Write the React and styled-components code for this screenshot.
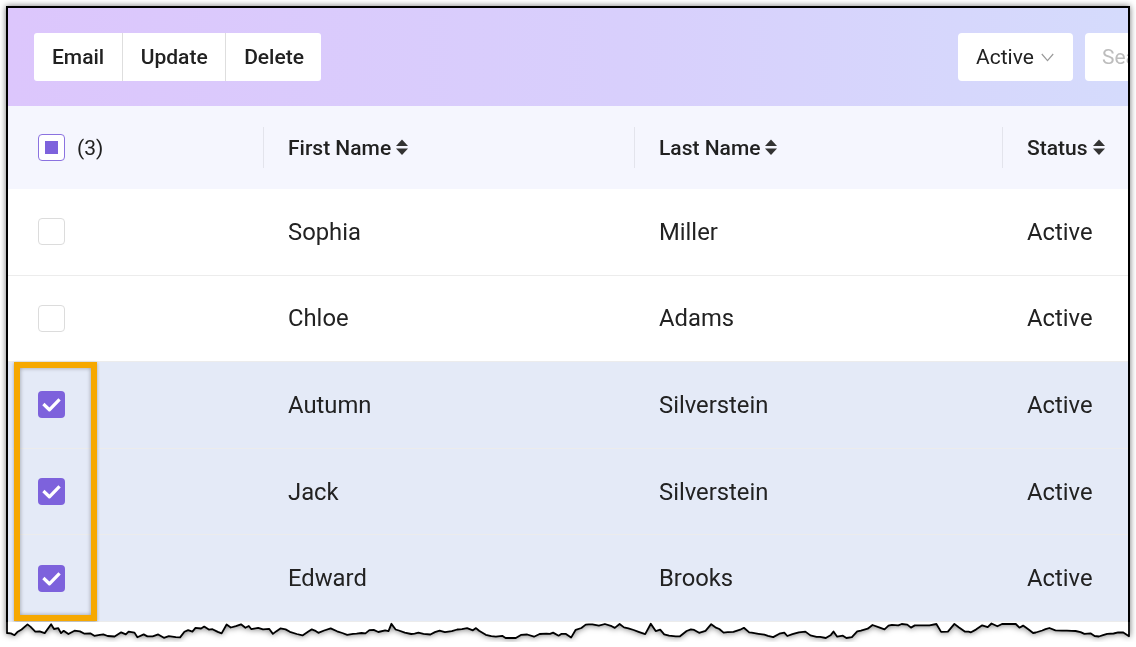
import React, { useMemo } from 'react';
import styled, { createGlobalStyle } from 'styled-components';

const Global = createGlobalStyle`
  html, body { margin: 0; padding: 0; background: #fff; overflow: hidden; }
  body { font-family: Roboto, "Liberation Sans", sans-serif; color: #212121; }
  * { box-sizing: border-box; }
`;

const Frame = styled.div`
  width: 1124px;
  margin: 6px 0 0 6px;
  filter: drop-shadow(0 0 3px rgba(0, 0, 0, 0.55));
`;

const Screen = styled.div`
  border: 2px solid #000;
  border-bottom: none;
  background: #fff;
  overflow: hidden;
`;

const Toolbar = styled.div`
  height: 98px;
  display: flex;
  justify-content: space-between;
  align-items: flex-start;
  padding: 25px 26px 0 26px;
  background: linear-gradient(90deg, #dcc6fc 0%, #d8cffc 55%, #d5dbfc 100%);
  overflow: hidden;
`;

const ButtonGroup = styled.div`
  display: flex;
  height: 48px;
  background: #fff;
  border-radius: 3px;
`;

const ActionButton = styled.button`
  height: 48px;
  padding: 0 17.5px 0 18px;
  border: none;
  border-left: ${(p) => (p.$first ? 'none' : '1px solid #dedede')};
  background: transparent;
  font-family: Roboto, "Liberation Sans", sans-serif;
  font-size: 21px;
  font-weight: 500;
  color: #212121;
`;

const RightGroup = styled.div`
  display: flex;
  gap: 12px;
  margin-right: -200px;
`;

const Dropdown = styled.div`
  width: 115px;
  height: 48px;
  background: #fff;
  border-radius: 4px;
  display: flex;
  align-items: center;
  gap: 7px;
  padding-left: 18px;
  font-size: 21px;
  color: #212121;
`;

const Search = styled.input`
  width: 217px;
  height: 48px;
  background: #fff;
  border: none;
  border-radius: 4px;
  padding: 0 0 0 17px;
  font-family: Roboto, "Liberation Sans", sans-serif;
  font-size: 21px;
  outline: none;
  &::placeholder { color: #bdbdbd; }
`;

const Table = styled.div`
  position: relative;
`;

const cols = '255px 371px 368px 1fr';

const HeaderRow = styled.div`
  display: grid;
  grid-template-columns: ${cols};
  align-items: center;
  height: 83px;
  background: #f5f6fe;
`;

const HeaderCell = styled.div`
  display: flex;
  align-items: center;
  height: 41px;
  gap: ${(p) => (p.$select ? '12px' : '5px')};
  padding-left: ${(p) => (p.$select ? '30px' : '24px')};
  border-left: ${(p) => (p.$select ? 'none' : '1px solid #e3e4ec')};
  font-size: 21px;
  font-weight: ${(p) => (p.$select ? 400 : 500)};
  color: #212121;
`;

const Row = styled.div`
  display: grid;
  grid-template-columns: ${cols};
  align-items: center;
  height: 86.6px;
  border-bottom: 1px solid #ececec;
  background: ${(p) => (p.$selected ? '#e4eaf7' : '#fff')};
`;

const Cell = styled.div`
  display: flex;
  align-items: center;
  padding-left: ${(p) => (p.$select ? '30px' : '25px')};
  font-size: 23.8px;
  color: #222;
`;

const Box = styled.span`
  width: 27px;
  height: 27px;
  border-radius: 4px;
  display: flex;
  align-items: center;
  justify-content: center;
  flex: none;
  background: ${(p) => (p.$state === 'checked' ? '#7d62dc' : '#fff')};
  border: ${(p) =>
    p.$state === 'checked'
      ? 'none'
      : p.$state === 'partial'
      ? '1.5px solid #8b72e0'
      : '1px solid #dcdcdc'};
`;

const PartialMark = styled.span`
  width: 13px;
  height: 13px;
  background: #7d62dc;
`;

const Highlight = styled.div`
  position: absolute;
  left: 6px;
  top: 256px;
  width: 83px;
  height: 259px;
  border: 6px solid #f6a800;
  box-shadow: inset 0 0 4px rgba(0, 0, 0, 0.35), 0 1px 3px rgba(0, 0, 0, 0.3);
  pointer-events: none;
`;

const Torn = styled.svg`
  display: block;
`;

function Checkbox({ state }) {
  return (
    <Box $state={state}>
      {state === 'checked' && (
        <svg width="27" height="27" viewBox="0 0 27 27">
          <path
            d="M6.6 14.2 L11.4 18.8 L20.4 9.6"
            fill="none"
            stroke="#fff"
            strokeWidth="3.3"
            strokeLinejoin="round"
            strokeLinecap="square"
          />
        </svg>
      )}
      {state === 'partial' && <PartialMark />}
    </Box>
  );
}

function SortIcon() {
  return (
    <svg width="12" height="17" viewBox="0 0 12 17">
      <polygon points="0,7 6,0.5 12,7" fill="#333" />
      <polygon points="0,9.5 12,9.5 6,16" fill="#333" />
    </svg>
  );
}

function Chevron() {
  return (
    <svg width="13" height="9" viewBox="0 0 13 9">
      <polyline points="0.8,1 6.5,7.6 12.2,1" fill="none" stroke="#9a9a9a" strokeWidth="1.2" />
    </svg>
  );
}

function TornEdge() {
  const { fill, stroke } = useMemo(() => {
    let s = 424242;
    const rnd = () => {
      s = (s * 16807) % 2147483647;
      return s / 2147483647;
    };
    const pts = [];
    let x = 1;
    let y = 11;
    let target = 10;
    pts.push([1, y]);
    while (x < 1123) {
      x = Math.min(1123, x + 2.5 + rnd() * 4.5);
      if (rnd() < 0.15) target = 3 + rnd() * 12;
      const r = rnd();
      if (r < 0.06) y = 1.5 + rnd() * 3;
      else y = Math.max(2, Math.min(16, y + (target - y) * 0.5 + (rnd() - 0.5) * 6));
      pts.push([x, y]);
    }
    const line = pts.map(([px, py]) => `${px.toFixed(1)},${py.toFixed(1)}`).join(' L');
    const first = pts[0];
    const last = pts[pts.length - 1];
    return {
      fill: `M0,0 L0,${first[1]} L${line} L1124,${last[1]} L1124,0 Z`,
      stroke: `M1,0 L${line} L1123,0`,
    };
  }, []);
  return (
    <Torn width="1124" height="20" viewBox="0 0 1124 20">
      <path d={fill} fill="#fff" />
      <path d={stroke} fill="none" stroke="#000" strokeWidth="1.8" strokeLinejoin="round" />
    </Torn>
  );
}

const rows = [
  { first: 'Sophia', last: 'Miller', status: 'Active', selected: false },
  { first: 'Chloe', last: 'Adams', status: 'Active', selected: false },
  { first: 'Autumn', last: 'Silverstein', status: 'Active', selected: true },
  { first: 'Jack', last: 'Silverstein', status: 'Active', selected: true },
  { first: 'Edward', last: 'Brooks', status: 'Active', selected: true },
];

export default function App() {
  return (
    <>
      <Global />
      <Frame>
        <Screen>
          <Toolbar>
            <ButtonGroup>
              <ActionButton $first>Email</ActionButton>
              <ActionButton>Update</ActionButton>
              <ActionButton>Delete</ActionButton>
            </ButtonGroup>
            <RightGroup>
              <Dropdown>
                Active
                <Chevron />
              </Dropdown>
              <Search placeholder="Search..." readOnly />
            </RightGroup>
          </Toolbar>
          <Table>
            <HeaderRow>
              <HeaderCell $select>
                <Checkbox state="partial" />
                (3)
              </HeaderCell>
              <HeaderCell>
                First Name
                <SortIcon />
              </HeaderCell>
              <HeaderCell>
                Last Name
                <SortIcon />
              </HeaderCell>
              <HeaderCell>
                Status
                <SortIcon />
              </HeaderCell>
            </HeaderRow>
            {rows.map((r, i) => (
              <Row key={i} $selected={r.selected}>
                <Cell $select>
                  <Checkbox state={r.selected ? 'checked' : 'empty'} />
                </Cell>
                <Cell>{r.first}</Cell>
                <Cell>{r.last}</Cell>
                <Cell>{r.status}</Cell>
              </Row>
            ))}
            <Highlight />
          </Table>
        </Screen>
        <TornEdge />
      </Frame>
    </>
  );
}
